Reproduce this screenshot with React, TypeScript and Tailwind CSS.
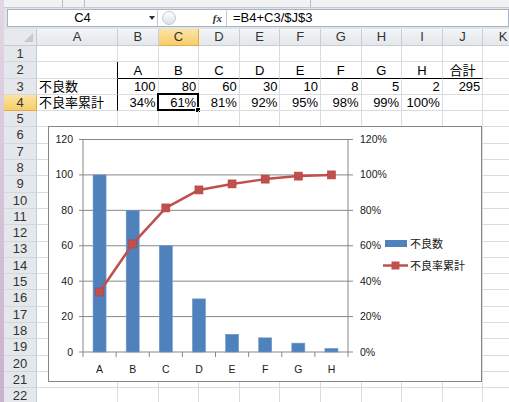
import React from "react";

const FONT = { fontFamily: '"Liberation Sans", "Noto Sans CJK JP", sans-serif' };

const cols = ["A", "B", "C", "D", "E", "F", "G", "H", "I", "J", "K"];
const colW = [
  "w-[81px]",
  "w-[40.6px]",
  "w-[40.6px]",
  "w-[40.6px]",
  "w-[40.6px]",
  "w-[40.6px]",
  "w-[40.6px]",
  "w-[40.6px]",
  "w-[40.6px]",
  "w-[40.6px]",
  "w-[40.6px]",
];

const counts = [100, 80, 60, 30, 10, 8, 5, 2];
const total = counts.reduce((a, b) => a + b, 0);
const cum = counts.map((_, i) => (counts.slice(0, i + 1).reduce((a, b) => a + b, 0) / total) * 100);
const labels = ["A", "B", "C", "D", "E", "F", "G", "H"];

type CellDef = { text?: string; align?: "l" | "c" | "r"; bottom?: boolean; right?: boolean; sel?: boolean };

function rowCells(r: number): CellDef[] {
  const empty: CellDef[] = cols.map(() => ({}));
  if (r === 2) {
    return cols.map((_, i) => {
      if (i === 0) return { right: true };
      if (i >= 1 && i <= 8) return { text: labels[i - 1], align: "c", bottom: true };
      if (i === 9) return { text: "合計", align: "c", bottom: true };
      return {};
    });
  }
  if (r === 3) {
    return cols.map((_, i) => {
      if (i === 0) return { text: "不良数", align: "l", right: true };
      if (i >= 1 && i <= 8) return { text: String(counts[i - 1]), align: "r" };
      if (i === 9) return { text: String(total), align: "r" };
      return {};
    });
  }
  if (r === 4) {
    return cols.map((_, i) => {
      if (i === 0) return { text: "不良率累計", align: "l", right: true };
      if (i >= 1 && i <= 8) return { text: Math.round(cum[i - 1]) + "%", align: "r", sel: i === 2 };
      return {};
    });
  }
  return empty;
}

function Cell({ c, w }: { c: CellDef; w: string }) {
  const align = c.align === "r" ? "justify-end pr-[2px]" : c.align === "c" ? "justify-center" : "justify-start pl-[2px]";
  return (
    <div
      className={`relative flex shrink-0 items-center pt-[1px] h-full border-b border-r ${w} ${align} ${
        c.bottom ? "border-b-black" : "border-b-[#dadcdd]"
      } ${c.right ? "border-r-black" : "border-r-[#dadcdd]"}`}
    >
      <span className="whitespace-nowrap">{c.text}</span>
      {c.sel && (
        <>
          <span className="absolute -left-[2px] -top-[2px] -right-[1px] -bottom-[1px] border-2 border-black" />
          <span className="absolute -right-[3px] -bottom-[3px] w-[6px] h-[6px] bg-black border border-white" />
        </>
      )}
    </div>
  );
}

function Chart() {
  const x0 = 35;
  const x1 = 300;
  const yTop = 13.5;
  const yBot = 226;
  const step = (x1 - x0) / 8;
  const yv = (v: number) => yBot - (v / 120) * (yBot - yTop);
  const cx = (i: number) => x0 + (i + 0.5) * step;
  const ticks = [0, 20, 40, 60, 80, 100, 120];
  const pts = cum.map((p, i) => `${cx(i)},${yv(p)}`).join(" ");
  return (
    <div className="absolute left-[48px] top-[126px] w-[434px] h-[256px] bg-white border border-[#868686]">
      <svg width="432" height="254" viewBox="1 1 432 254" style={FONT}>
        {ticks.map((t) => (
          <g key={t}>
            <line x1={x0 - 4} x2={x1 + 5} y1={yv(t)} y2={yv(t)} stroke="#878787" strokeWidth="1" />
            <text x={x0 - 10} y={yv(t) + 3.5} fontSize="10.5" textAnchor="end" fill="#1a1a1a">
              {t}
            </text>
            <text x={x1 + 12} y={yv(t) + 3.5} fontSize="10.5" fill="#1a1a1a">
              {t}%
            </text>
          </g>
        ))}
        <line x1={x0} x2={x0} y1={yTop} y2={yBot} stroke="#878787" />
        <line x1={x1} x2={x1} y1={yTop} y2={yBot} stroke="#878787" />
        {Array.from({ length: 9 }).map((_, i) => (
          <line key={i} x1={x0 + i * step} x2={x0 + i * step} y1={yBot} y2={yBot + 5} stroke="#878787" />
        ))}
        {counts.map((v, i) => (
          <rect
            key={i}
            x={cx(i) - 6.5}
            y={yv(v)}
            width="13"
            height={yBot - yv(v)}
            fill="#4f81bd"
            stroke="#6f97c8"
            strokeWidth="0.6"
          />
        ))}
        {labels.map((l, i) => (
          <text key={l} x={cx(i)} y={yBot + 21} fontSize="10.5" textAnchor="middle" fill="#1a1a1a">
            {l}
          </text>
        ))}
        <polyline points={pts} fill="none" stroke="#c0504d" strokeWidth="2.5" strokeLinejoin="round" />
        {cum.map((p, i) => (
          <rect key={i} x={cx(i) - 4} y={yv(p) - 4} width="8" height="8" fill="#c0504d" stroke="#b5403d" strokeWidth="0.6" />
        ))}
        <rect x="337" y="114" width="22" height="7" fill="#4f81bd" />
        <text x="362" y="121.5" fontSize="11" fill="#1a1a1a">
          不良数
        </text>
        <line x1="335" x2="360" y1="139.5" y2="139.5" stroke="#c0504d" strokeWidth="2.5" />
        <rect x="343.5" y="135.5" width="8" height="8" fill="#c0504d" />
        <text x="362" y="144" fontSize="11" fill="#1a1a1a">
          不良率累計
        </text>
      </svg>
    </div>
  );
}

export default function App() {
  const rows = Array.from({ length: 22 }, (_, i) => i + 1);
  return (
    <div className="relative w-[509px] h-[402px] overflow-hidden bg-white text-[13px] text-black flex" style={FONT}>
      <div className="w-[4px] shrink-0 bg-gradient-to-b from-[#e2d6e4] to-[#c9b2cc]" />
      <div className="flex-1 flex flex-col min-w-0">
        {/* ribbon edge */}
        <div className="h-[8px] shrink-0 flex bg-[#f1f2f4] border-b border-[#c8ccd2]">
          <div className="w-[59px] border-r border-[#b8bec6]" />
          <div className="w-[22px] border-r border-[#b8bec6]" />
          <div className="w-[226px] border-r border-[#b8bec6]" />
          <div className="flex-1" />
        </div>
        {/* formula bar */}
        <div className="h-[21px] shrink-0 flex items-stretch bg-[#dfe4ea] pt-[1px] pb-[2px] pl-[3px]">
          <div className="flex-1 flex bg-white border border-[#a9b2bd]">
            <div className="w-[150px] flex items-center justify-center relative border-r border-[#c3c9d0]">
              <span>C4</span>
              <span className="absolute right-[2px] top-[6px] w-0 h-0 border-l-[3px] border-r-[3px] border-t-[4px] border-l-transparent border-r-transparent border-t-[#333]" />
            </div>
            <div className="w-[68px] flex items-center relative">
              <span className="ml-[4px] w-[14px] h-[14px] rounded-full border border-[#c3c9d0] bg-gradient-to-b from-white to-[#dde1e6]" />
              <span className="ml-auto mr-[4px] italic font-bold text-[11px] text-[#333]" style={{ fontFamily: '"Liberation Serif", serif' }}>
                fx
              </span>
            </div>
            <div className="flex-1 flex items-center pl-[6px] border-l border-[#c3c9d0]">=B4+C3/$J$3</div>
          </div>
        </div>
        {/* column headers */}
        <div className="h-[17px] shrink-0 flex text-[#333] bg-[#e6e9ed]">
          <div className="w-[33px] shrink-0 h-full relative border-r border-b border-[#c5cbd2] bg-[#e6e9ed]">
            <svg className="absolute right-[3px] bottom-[3px]" width="9" height="9">
              <polygon points="9,0 9,9 0,9" fill="#c4c9cf" />
            </svg>
          </div>
          {cols.map((c, i) => (
            <div
              key={c}
              className={`${colW[i]} shrink-0 h-full flex items-center justify-center border-r border-b ${
                c === "C"
                  ? "bg-gradient-to-b from-[#fbe5a3] to-[#f6cd68] border-[#e9a944]"
                  : "bg-gradient-to-b from-[#f3f5f7] to-[#e3e7eb] border-[#c9ced4]"
              }`}
            >
              {c}
            </div>
          ))}
        </div>
        {/* rows */}
        {rows.map((r) => (
          <div key={r} className="h-[16.3px] shrink-0 flex">
            <div
              className={`w-[33px] shrink-0 h-full flex items-center justify-center border-r border-b text-[#333] ${
                r === 4
                  ? "bg-gradient-to-b from-[#fbe5a3] to-[#f6cd68] border-[#e9a944]"
                  : "bg-[#e4e8ec] border-r-[#c5cbd2] border-b-[#d3d8dd]"
              }`}
            >
              {r}
            </div>
            {rowCells(r).map((c, i) => (
              <Cell key={i} c={c} w={colW[i]} />
            ))}
          </div>
        ))}
      </div>
      <Chart />
    </div>
  );
}
